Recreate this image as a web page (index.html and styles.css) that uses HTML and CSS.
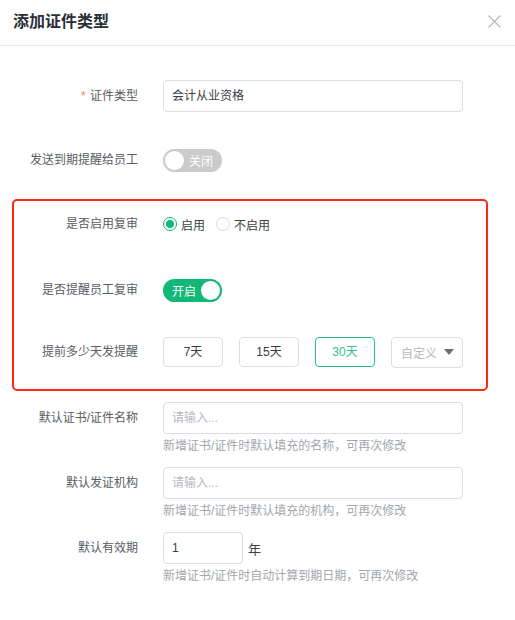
FILE: index.html
```html
<!DOCTYPE html>
<html lang="zh-CN">
<head>
<meta charset="utf-8">
<title>添加证件类型</title>
<link rel="stylesheet" href="styles.css">
</head>
<body>
<div class="dialog">
  <div class="header">
    <h1 class="title">添加证件类型</h1>
    <svg class="close" width="13" height="13" viewBox="0 0 13 13"><path d="M0.5 0.5 L12.5 12.5 M12.5 0.5 L0.5 12.5" stroke="#b4b6ba" stroke-width="1.1" fill="none"/></svg>
  </div>
  <div class="form">
    <div class="row r1">
      <div class="label"><span class="req">*</span> 证件类型</div>
      <div class="control"><div class="input">会计从业资格</div></div>
    </div>
    <div class="row r2">
      <div class="label">发送到期提醒给员工</div>
      <div class="control">
        <div class="switch off"><span class="knob"></span><span class="stext">关闭</span></div>
      </div>
    </div>
    <div class="group">
      <div class="row r3">
        <div class="label">是否启用复审</div>
        <div class="control radios">
          <span class="radio checked"></span><span class="rtext">启用</span>
          <span class="radio"></span><span class="rtext">不启用</span>
        </div>
      </div>
      <div class="row r4">
        <div class="label">是否提醒员工复审</div>
        <div class="control">
          <div class="switch on"><span class="stext">开启</span><span class="knob"></span></div>
        </div>
      </div>
      <div class="row r5">
        <div class="label">提前多少天发提醒</div>
        <div class="control btns">
          <div class="btn">7天</div>
          <div class="btn">15天</div>
          <div class="btn active">30天</div>
          <div class="select"><span class="ph">自定义</span><span class="caret"></span></div>
        </div>
      </div>
    </div>
    <div class="row r6">
      <div class="label">默认证书/证件名称</div>
      <div class="control col">
        <div class="input ph">请输入...</div>
        <div class="help">新增证书/证件时默认填充的名称，可再次修改</div>
      </div>
    </div>
    <div class="row r7">
      <div class="label">默认发证机构</div>
      <div class="control col">
        <div class="input ph">请输入...</div>
        <div class="help">新增证书/证件时默认填充的机构，可再次修改</div>
      </div>
    </div>
    <div class="row r8">
      <div class="label">默认有效期</div>
      <div class="control col">
        <div class="inline"><div class="input short">1</div><span class="unit">年</span></div>
        <div class="help">新增证书/证件时自动计算到期日期，可再次修改</div>
      </div>
    </div>
  </div>
</div>
</body>
</html>
```
FILE: styles.css
```css
* { box-sizing: border-box; }
html, body { margin: 0; padding: 0; background: #fff; }
body {
  font-family: "Liberation Sans", "Noto Sans CJK SC", sans-serif;
  font-size: 12px;
  color: #595c63;
  width: 515px;
  height: 620px;
  overflow: hidden;
}
.header {
  height: 46px;
  border-bottom: 1px solid #e9e9eb;
  display: flex;
  align-items: center;
  justify-content: space-between;
  padding: 0 14px 2px 13px;
}
.title {
  margin: 0;
  font-size: 16px;
  font-weight: 700;
  color: #2b2f36;
  line-height: 22px;
}
.close { display: block; margin-top: -1px; }
.form { padding-top: 34px; }
.row { display: flex; align-items: center; }
.row.r6, .row.r7, .row.r8 { align-items: flex-start; }
.label {
  width: 138px;
  flex: none;
  text-align: right;
  line-height: 32px;
  color: #595c63;
  white-space: nowrap;
}
.group .label { width: 124px; }
.control { margin-left: 25px; display: flex; align-items: center; height: 32px; }
.control.col { flex-direction: column; align-items: flex-start; height: auto; }
.req { color: #f5804f; margin-right: 1px; }
.r2 { margin-top: 32px; }
.group {
  margin: 23px 0 0 12px;
  width: 476px;
  border: 2px solid #fb2a12;
  border-radius: 5px;
  padding: 7px 0 21px 0;
}
.r4 { margin-top: 34px; }
.r5 { margin-top: 30px; }
.r6 { margin-top: 11px; }
.r7, .r8 { margin-top: 12px; }
.input {
  width: 300px;
  height: 32px;
  border: 1px solid #dcdde1;
  border-radius: 4px;
  padding: 0 8px;
  line-height: 30px;
  color: #3a3d44;
}
.input.ph { color: #b8bac0; }
.input.short { width: 80px; }
.inline { display: flex; align-items: center; }
.unit { margin-left: 5px; color: #3a3d44; font-size: 13px; }
.help {
  margin-top: 3px;
  line-height: 18px;
  color: #a3a6ac;
  white-space: nowrap;
}
.switch {
  width: 59px;
  height: 23px;
  border-radius: 12px;
  display: flex;
  align-items: center;
  padding: 0 2px;
  color: #fff;
}
.switch.off { background: #cbcbcb; }
.switch.on { background: #12b877; justify-content: space-between; }
.knob {
  width: 19px;
  height: 19px;
  border-radius: 50%;
  background: #fff;
  flex: none;
}
.switch.off .stext { margin-left: 5px; }
.switch.on .stext { margin-left: 7px; }
.radio {
  width: 14px;
  height: 14px;
  border-radius: 50%;
  border: 1px solid #dadbde;
  display: inline-block;
  flex: none;
  position: relative;
}
.radio.checked { border-color: #12b877; }
.radio.checked::after {
  content: "";
  position: absolute;
  left: 2px; top: 2px;
  width: 8px; height: 8px;
  border-radius: 50%;
  background: #12b877;
}
.rtext { margin-left: 4px; margin-right: 11px; color: #3a3d44; }
.btns { gap: 16px; }
.btn {
  width: 60px;
  height: 30px;
  border: 1px solid #dcdde1;
  border-radius: 4px;
  text-align: center;
  line-height: 28px;
  color: #3a3d44;
}
.btn.active { border-color: #22c386; color: #2fc48b; }
.select {
  width: 72px;
  height: 31px;
  border: 1px solid #dcdde1;
  border-radius: 4px;
  display: flex;
  align-items: center;
  justify-content: space-between;
  padding: 0 8px 0 9px;
}
.select .ph { color: #b8bac0; }
.caret {
  width: 0; height: 0;
  border-left: 5px solid transparent;
  border-right: 5px solid transparent;
  border-top: 6px solid #6c6f76;
}
```
